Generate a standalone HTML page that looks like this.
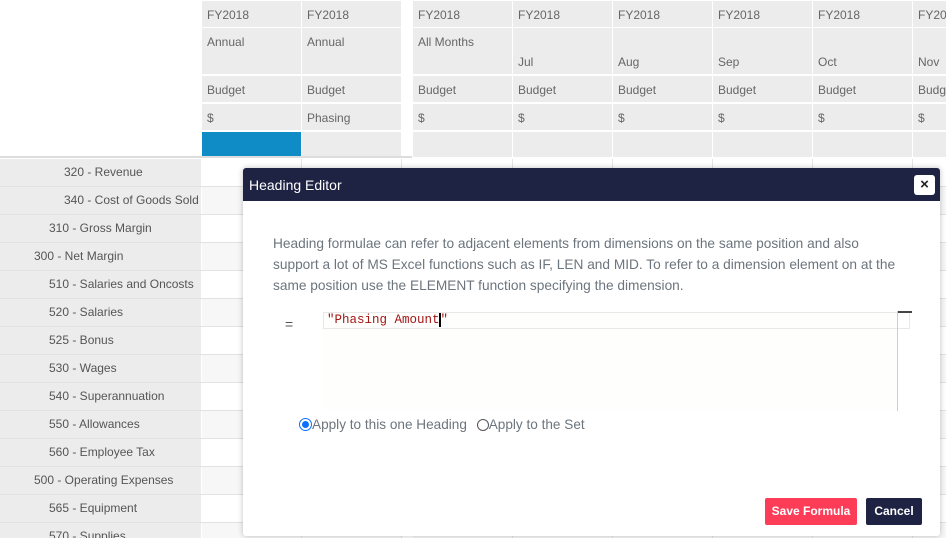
<!DOCTYPE html>
<html><head><style>
html,body{margin:0;width:946px;height:538px;overflow:hidden}
body{background:#fff;font-family:"Liberation Sans",sans-serif;position:relative}
.c{position:absolute;background:#ececec;box-sizing:border-box;font-size:12px;color:#666;padding:7px 0 0 5px}
.l{position:absolute;left:0;width:201px;height:27px;background:#ececec;font-size:12px;color:#555;line-height:27px;white-space:nowrap}
.w{position:absolute;width:99px;height:27px;background:#fff;border-right:1px solid #e4e4e4}
.hl{position:absolute;left:0;height:1px;width:946px;background:#e2e2e2}
</style></head><body>
<div id="hdr"></div>
<div id="body"></div>
<div style="position:absolute;left:0;top:156px;width:412px;height:2px;background:#ddd"></div>
<script>
var cols=[[202,'FY2018','Annual','','Budget','$'],[302,'FY2018','Annual','','Budget','Phasing'],[413,'FY2018','All Months','','Budget','$'],[513,'FY2018','','Jul','Budget','$'],[613,'FY2018','','Aug','Budget','$'],[713,'FY2018','','Sep','Budget','$'],[813,'FY2018','','Oct','Budget','$'],[913,'FY201','','Nov','Budg','$']];
var h='';
cols.forEach(function(c,i){var x=c[0];
h+='<div class="c" style="left:'+x+'px;top:1px;width:99px;height:26px">'+c[1]+'</div>';
h+='<div class="c" style="left:'+x+'px;top:28px;width:99px;height:46px">'+c[2]+'<div style="position:absolute;left:5px;top:27px">'+c[3]+'</div></div>';
h+='<div class="c" style="left:'+x+'px;top:76px;width:99px;height:26px">'+c[4]+'</div>';
h+='<div class="c" style="left:'+x+'px;top:104px;width:99px;height:26px">'+c[5]+'</div>';
h+='<div class="c" style="left:'+x+'px;top:132px;width:99px;height:25px;'+(i==0?'background:#0f8bc6':'')+'"></div>';
});
document.getElementById('hdr').innerHTML=h;
var rows=[[64,'320 - Revenue'],[64,'340 - Cost of Goods Sold'],[49,'310 - Gross Margin'],[34,'300 - Net Margin'],[49,'510 - Salaries and Oncosts'],[49,'520 - Salaries'],[49,'525 - Bonus'],[49,'530 - Wages'],[49,'540 - Superannuation'],[49,'550 - Allowances'],[49,'560 - Employee Tax'],[34,'500 - Operating Expenses'],[49,'565 - Equipment'],[49,'570 - Supplies']];
var b='';
rows.forEach(function(r,i){var y=159+i*28;
b+='<div class="l" style="top:'+y+'px;padding-left:'+r[0]+'px;box-sizing:border-box">'+r[1]+'</div>';
cols.forEach(function(c){b+='<div class="w" style="left:'+c[0]+'px;top:'+y+'px;background:'+(i%2?'#f7f7f7':'#fff')+'"></div>';});
b+='<div class="hl" style="top:'+(y+27)+'px"></div>';
});
document.getElementById('body').innerHTML=b;
</script>
<div style="position:absolute;left:243px;top:168px;width:697px;height:368px;background:#fff;border-radius:3px;box-shadow:0 0 6px rgba(0,0,0,.25);overflow:hidden">
<div style="height:33px;background:#1f2343;color:#fff;font-size:14px;line-height:34px;padding-left:6px">Heading Editor</div>
<div style="position:absolute;left:671px;top:7px;width:21px;height:20px;background:#fff;border-radius:3px;color:#222;font-weight:bold;font-size:15px;text-align:center;line-height:20px">×</div>
<div style="position:absolute;left:30px;top:65px;width:660px;font-size:13.7px;line-height:21px;color:#6c757d;white-space:nowrap">Heading formulae can refer to adjacent elements from dimensions on the same position and also<br>support a lot of MS Excel functions such as IF, LEN and MID. To refer to a dimension element on at the<br>same position use the ELEMENT function specifying the dimension.</div>
<div style="position:absolute;left:42px;top:148px;font-size:14px;color:#555">=</div>
<div style="position:absolute;left:80px;top:144px;width:575px;height:98px;background:#fefefc"></div>
<div style="position:absolute;left:80px;top:144px;width:587px;height:17px;border:1px solid #e8e8e8;box-sizing:border-box"></div>
<div style="position:absolute;left:84px;top:145px;font-family:'Liberation Mono',monospace;font-size:12.5px;color:#a31515">"Phasing Amount<span style="border-left:2px solid #000;margin-left:-1px"></span>"</div>
<div style="position:absolute;left:654px;top:143px;width:1px;height:100px;background:#ccc"></div>
<div style="position:absolute;left:655px;top:143px;width:14px;height:2px;background:#444"></div>
<div style="position:absolute;left:56px;top:249px;font-size:13.6px;color:#6c757d;line-height:16px">
<span style="display:inline-block;width:13px;height:13px;border:1px solid #0d6efd;border-radius:50%;vertical-align:-2px;position:relative;box-sizing:border-box"><span style="position:absolute;left:2px;top:2px;width:7px;height:7px;border-radius:50%;background:#0d6efd"></span></span>Apply to this one Heading <span style="display:inline-block;width:12px;height:12px;border:1px solid #555;border-radius:50%;vertical-align:-2px;box-sizing:border-box;margin-left:6px"></span>Apply to the Set</div>
<div style="position:absolute;left:522px;top:330px;width:92px;height:27px;background:#fd3d57;color:#fff;font-size:12px;font-weight:bold;text-align:center;line-height:27px;border-radius:2px">Save Formula</div>
<div style="position:absolute;left:623px;top:330px;width:56px;height:27px;background:#1f2343;color:#fff;font-size:12px;font-weight:bold;text-align:center;line-height:27px;border-radius:2px">Cancel</div>
</div>
</body></html>
